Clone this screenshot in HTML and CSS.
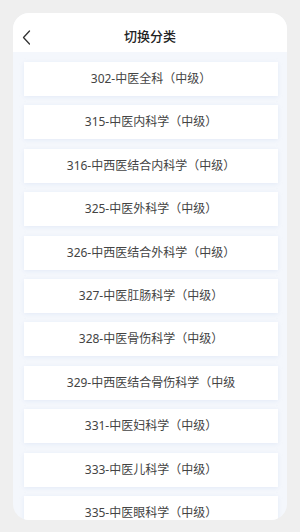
FILE: index.html
```html
<!DOCTYPE html>
<html lang="zh-CN">
<head>
    <meta charset="UTF-8">
    <meta name="viewport" content="width=device-width, initial-scale=1.0">
    <title>切换分类</title>
    <link rel="stylesheet" href="styles.css">
</head>
<body>

<div class="panel">
    <!-- Header -->
    <div class="header">
        <span class="back">
            <svg width="10" height="15" viewBox="0 0 10 15">
                <path d="M7.5 1 L1.5 7.5 L7.5 14" fill="none" stroke="#333" stroke-width="1.3" stroke-linecap="round" stroke-linejoin="round"/>
            </svg>
        </span>
        <h1 class="title">切换分类</h1>
    </div>

    <!-- Category list -->
    <div class="list">
        <div class="item">302-中医全科（中级）</div>
        <div class="item">315-中医内科学（中级）</div>
        <div class="item">316-中西医结合内科学（中级）</div>
        <div class="item">325-中医外科学（中级）</div>
        <div class="item">326-中西医结合外科学（中级）</div>
        <div class="item">327-中医肛肠科学（中级）</div>
        <div class="item">328-中医骨伤科学（中级）</div>
        <div class="item">329-中西医结合骨伤科学（中级</div>
        <div class="item">331-中医妇科学（中级）</div>
        <div class="item">333-中医儿科学（中级）</div>
        <div class="item">335-中医眼科学（中级）</div>
    </div>
</div>

</body>
</html>
```

FILE: styles.css
```css
* {
    box-sizing: border-box;
}
html, body {
    height: 100%;
}
body {
    margin: 0;
    padding: 13px 13px 12px;
    background-color: #efefef;
    font-family: "Noto Sans", "Noto Sans CJK SC", sans-serif;
}

/* Main card */
.panel {
    height: 100%;
    border-radius: 16px;
    overflow: hidden;
    background-color: #f4f7fc;
    display: flex;
    flex-direction: column;
}

.header {
    height: 39px;
    flex-shrink: 0;
    padding-top: 5px;
    background-color: #ffffff;
    display: flex;
    align-items: center;
    justify-content: center;
    position: relative;
}
.back {
    position: absolute;
    left: 9px;
    top: 17px;
    display: flex;
}
.title {
    margin: 0;
    font-size: 13px;
    font-weight: 500;
    color: #222;
}

/* List */
.list {
    flex: 1;
    overflow: hidden;
    padding: 10px 9px 0 11px;
    display: flex;
    flex-direction: column;
    gap: 9.4px;
}
.item {
    flex-shrink: 0;
    height: 34px;
    background-color: #ffffff;
    box-shadow: 0 1px 4px rgba(200, 215, 240, 0.35);
    display: flex;
    align-items: center;
    justify-content: center;
    white-space: nowrap;
    font-size: 12px;
    line-height: 1;
    color: #444;
}
```
